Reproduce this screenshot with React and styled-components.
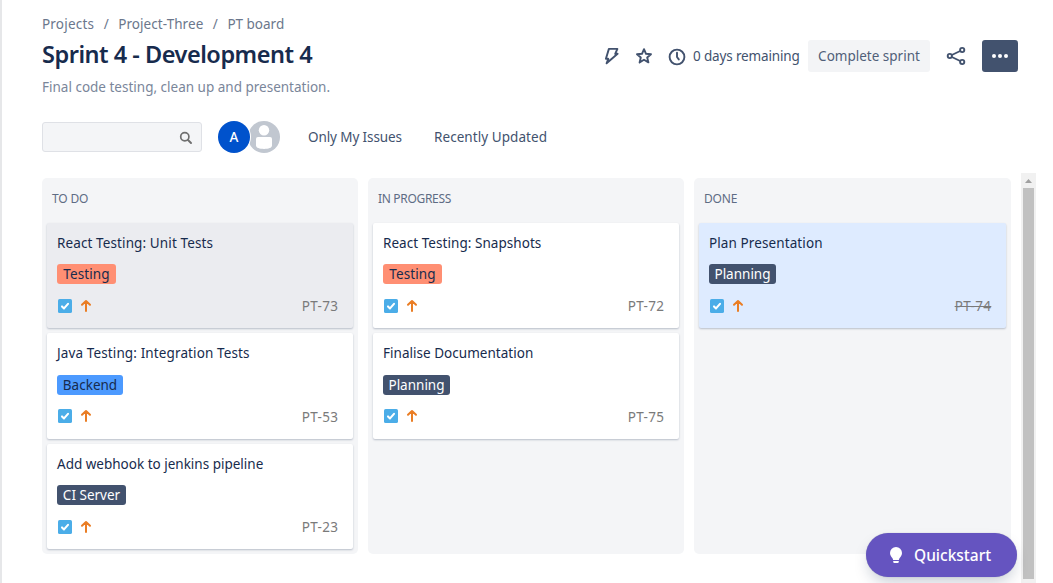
import React from "react";
import styled, { createGlobalStyle, css } from "styled-components";

const Global = createGlobalStyle`
  *, *::before, *::after { box-sizing: border-box; }
  html, body { margin: 0; padding: 0; overflow: hidden; background: #fff; }
  body { font-family: "Noto Sans", "Open Sans", sans-serif; font-size: 13.5px; color: #172b4d; }
  button { font: inherit; border: 0; padding: 0; background: none; color: inherit; letter-spacing: inherit; }
`;

const Page = styled.main`
  position: relative;
  width: 1053px;
  height: 583px;
  padding: 14px 17px 0 40px;
  border-left: 2px solid #e6e7e9;
  display: flex;
  flex-direction: column;
  overflow: hidden;
`;

const Text = styled.span`
  letter-spacing: ${(p) => p.$track || 0}px;
  white-space: nowrap;
`;

const Breadcrumbs = styled.nav`
  display: flex;
  height: 20px;
  align-items: center;
  color: #6b778c;
`;

const Separator = styled.span`
  width: 24px;
  text-align: center;
`;

const Header = styled.header`
  display: flex;
  height: 64px;
  justify-content: space-between;
  padding-right: 18px;
`;

const Heading = styled.div`
  display: flex;
  flex-direction: column;
`;

const Title = styled.h1`
  margin: 6px 0 0;
  height: 28px;
  line-height: 28px;
  font-size: 23.5px;
  font-weight: 600;
  white-space: nowrap;
  letter-spacing: -0.48px;
`;

const Goal = styled.p`
  margin: 9px 0 0;
  height: 20px;
  line-height: 20px;
  color: #7a869a;
`;

const Actions = styled.div`
  display: flex;
  height: 32px;
  margin-top: 6px;
  align-items: center;
  color: #42526e;
`;

const IconSlot = styled.button`
  display: flex;
  width: ${(p) => p.$w || 32}px;
  height: 32px;
  align-items: center;
  justify-content: center;
  color: #42526e;
`;

const Remaining = styled.div`
  width: 115px;
`;

const CompleteButton = styled.button`
  width: 122px;
  height: 32px;
  border-radius: 3px;
  background: #f3f4f6;
  color: #505f79;
`;

const MoreButton = styled.button`
  display: flex;
  width: 36px;
  height: 32px;
  align-items: center;
  justify-content: center;
  border-radius: 3px;
  background: #42526e;
  color: #fff;
`;

const Filters = styled.div`
  display: flex;
  height: 32px;
  margin-top: 23px;
  align-items: center;
  color: #42526e;
`;

const Search = styled.div`
  display: flex;
  width: 160px;
  height: 30px;
  align-items: center;
  justify-content: flex-end;
  padding: 2px 8px 0 0;
  border: 1px solid #dfe1e6;
  border-radius: 3px;
  background: #f4f5f7;
  color: #6f6f6f;
`;

const Avatars = styled.div`
  display: flex;
  margin-left: 16px;
  width: 90px;
`;

const Avatar = styled.div`
  position: relative;
  z-index: 1;
  width: 32px;
  height: 32px;
  border-radius: 50%;
  background: #0052cc;
  box-shadow: 0 0 0 1px #fff;
  color: #fff;
  font-size: 13.5px;
  font-weight: 500;
  line-height: 32px;
  text-align: center;
`;

const Anonymous = styled.svg`
  margin-left: -2px;
`;

const FilterLink = styled.button`
  width: ${(p) => p.$w}px;
  text-align: left;
`;

const BoardArea = styled.section`
  display: flex;
  flex: 1;
  min-height: 0;
  margin-top: 20px;
`;

const Columns = styled.div`
  display: grid;
  grid-template-columns: 316px 316px 317px;
  column-gap: 10px;
  height: 376px;
  margin-top: 5px;
`;

const Column = styled.div`
  padding: 0 4.7px 0 5px;
  border-radius: 5px;
  background: #f4f5f7;
`;

const ColumnTitle = styled.h2`
  margin: 0;
  height: 44.7px;
  padding: 11px 5px 0;
  line-height: 20px;
  font-size: 12px;
  font-weight: 400;
  color: #5e6c84;
`;

const backgrounds = { plain: "#fff", hovered: "#ebecf0", selected: "#deebff" };

const Card = styled.article`
  height: 105.5px;
  margin-bottom: 5px;
  padding: 10px 15px 0 10px;
  border-radius: 2px;
  background: ${(p) => backgrounds[p.$state]};
  box-shadow: 0 1px 2px rgba(9, 30, 66, 0.25);
`;

const Summary = styled.div`
  height: 21px;
  line-height: 21px;
`;

const tones = {
  coral: css`background: #ff8f73; color: #172b4d;`,
  blue: css`background: #4c9aff; color: #172b4d;`,
  navy: css`background: #42526e; color: #fff;`,
};

const Label = styled.div`
  width: ${(p) => p.$w}px;
  height: 20px;
  margin-top: 10.4px;
  border-radius: 3px;
  line-height: 20px;
  text-align: center;
  ${(p) => tones[p.$tone]}
`;

const CardFooter = styled.div`
  display: flex;
  height: 20px;
  margin-top: 11.5px;
  align-items: center;
`;

const TaskIcon = styled.svg`
  margin: 0 7px 0 1px;
`;

const IssueKey = styled.div`
  margin-left: auto;
  padding-top: 1px;
  line-height: 20px;
  color: #7a7a7a;
  text-decoration: ${(p) => (p.$done ? "line-through" : "none")};
`;

const Scrollbar = styled.div`
  width: 15px;
  height: 410px;
  margin-left: 10px;
  background: #f1f1f1;
  display: flex;
  flex-direction: column;
  align-items: center;
`;

const ScrollArrow = styled.svg`
  display: block;
  flex: none;
`;

const Thumb = styled.div`
  width: 11px;
  height: 391px;
  background: #c1c1c1;
`;

const Quickstart = styled.button`
  position: absolute;
  right: 36px;
  bottom: 6px;
  display: flex;
  width: 151px;
  height: 44px;
  align-items: center;
  padding-left: 20px;
  gap: 8px;
  border-radius: 22px;
  background: #6554c0;
  color: #fff;
  font-size: 15.5px;
  font-weight: 500;
  box-shadow: 0 8px 16px -4px rgba(9, 30, 66, 0.25), 0 0 1px rgba(9, 30, 66, 0.31);
`;

const columns = [
  {
    name: "TO DO", track: -0.15,
    cards: [
      { title: "React Testing: Unit Tests", track: 0.11, label: "Testing", labelTrack: 0.1, tone: "coral", w: 59, key: "PT-73", state: "hovered" },
      { title: "Java Testing: Integration Tests", track: 0.12, label: "Backend", tone: "blue", w: 66, key: "PT-53", state: "plain" },
      { title: "Add webhook to jenkins pipeline", track: 0, label: "CI Server", tone: "navy", w: 69, key: "PT-23", state: "plain" },
    ],
  },
  {
    name: "IN PROGRESS", track: -0.32,
    cards: [
      { title: "React Testing: Snapshots", track: 0.05, label: "Testing", labelTrack: 0.1, tone: "coral", w: 59, key: "PT-72", state: "plain" },
      { title: "Finalise Documentation", track: 0.03, label: "Planning", tone: "navy", w: 67, key: "PT-75", state: "plain" },
    ],
  },
  {
    name: "DONE", track: -0.2,
    cards: [
      { title: "Plan Presentation", track: 0.1, label: "Planning", tone: "navy", w: 67, key: "PT-74", state: "selected", done: true },
    ],
  },
];

const IssueCard = ({ card }) => (
  <Card $state={card.state}>
    <Summary><Text $track={card.track}>{card.title}</Text></Summary>
    <Label $tone={card.tone} $w={card.w}><Text $track={card.labelTrack}>{card.label}</Text></Label>
    <CardFooter>
      <TaskIcon width="14" height="14" viewBox="0 0 14 14">
        <rect width="14" height="14" rx="1.6" fill="#4bade8" />
        <path d="M4 7.4 6 9.4 10 4.9" fill="none" stroke="#fff" strokeWidth="2.1" strokeLinecap="round" strokeLinejoin="round" />
      </TaskIcon>
      <svg width="14" height="14" viewBox="0 0 14 14" fill="none" stroke="#ea7d24" strokeWidth="2" strokeLinecap="round" strokeLinejoin="round">
        <path d="M7 12V2.2M3 5.800 7 2l4 3.800" />
      </svg>
      <IssueKey $done={card.done}><Text $track={0.35}>{card.key}</Text></IssueKey>
    </CardFooter>
  </Card>
);

export default function App() {
  return (
    <>
      <Global />
      <Page>
        <Breadcrumbs>
          <Text $track={0.2}>Projects</Text><Separator>/</Separator>
          <Text $track={0.07}>Project-Three</Text><Separator>/</Separator>
          <Text>PT board</Text>
        </Breadcrumbs>
        <Header>
          <Heading>
            <Title>Sprint 4 - Development 4</Title>
            <Goal><Text>Final code testing, clean up and presentation.</Text></Goal>
          </Heading>
          <Actions>
            <IconSlot aria-label="Automation">
              <svg width="24" height="24" viewBox="0 0 24 24" fill="none" stroke="currentColor" strokeWidth="1.9" strokeLinejoin="round">
                <path d="M8.900 4.900H17.400L15.200 9.800H17.600L6.600 19.300 8.300 14.800H5.900Z" />
              </svg>
            </IconSlot>
            <IconSlot aria-label="Star">
              <svg width="24" height="24" viewBox="0 0 24 24" fill="none" stroke="currentColor" strokeWidth="1.9" strokeLinejoin="round">
                <path d="m12 5.2 2 4.6 5 .4-3.8 3.3 1.2 4.9-4.4-2.6-4.4 2.6 1.2-4.9L5 10.2l5-.4z" />
              </svg>
            </IconSlot>
            <IconSlot aria-label="Time remaining" $w={33}>
              <svg width="24" height="24" viewBox="0 0 24 24" fill="none" stroke="currentColor" strokeWidth="1.9" strokeLinecap="round" strokeLinejoin="round">
                <circle cx="12" cy="13" r="7.4" />
                <path d="M12 8.8V13l1.800 2.400" />
              </svg>
            </IconSlot>
            <Remaining><Text $track={-0.15}>0 days remaining</Text></Remaining>
            <CompleteButton><Text>Complete sprint</Text></CompleteButton>
            <IconSlot aria-label="Share" $w={52}>
              <svg width="24" height="24" viewBox="0 0 24 24" fill="none" stroke="currentColor" strokeWidth="1.9">
                <circle cx="5.8" cy="12" r="2.1" />
                <circle cx="18.2" cy="6" r="2.1" />
                <circle cx="18.2" cy="18" r="2.1" />
                <path d="m7.8 11 8.4-4M7.8 13l8.4 4" />
              </svg>
            </IconSlot>
            <MoreButton aria-label="More">
              <svg width="18" height="6" viewBox="0 0 18 6" fill="currentColor">
                <circle cx="3" cy="3" r="2" /><circle cx="9" cy="3" r="2" /><circle cx="15" cy="3" r="2" />
              </svg>
            </MoreButton>
          </Actions>
        </Header>
        <Filters>
          <Search>
            <svg width="14" height="14" viewBox="0 0 14 14" fill="none" stroke="currentColor" strokeWidth="1.7" strokeLinecap="round">
              <circle cx="5.800" cy="5.800" r="4.100" /><path d="m9 9 3 3" strokeWidth="2" />
            </svg>
          </Search>
          <Avatars>
            <Avatar>A</Avatar>
            <Anonymous width="32" height="32" viewBox="0 0 32 32">
              <circle cx="16" cy="16" r="16" fill="#c1c7d0" />
              <circle cx="16" cy="9.3" r="5.2" fill="#fff" />
              <path d="M8 18a2 2 0 0 1 2-2h12a2 2 0 0 1 2 2v6.600c0 2.400-3.600 3.400-8 3.400s-8-1-8-3.400z" fill="#fff" />
            </Anonymous>
          </Avatars>
          <FilterLink $w={126}><Text $track={-0.1}>Only My Issues</Text></FilterLink>
          <FilterLink $w={120}><Text $track={0.06}>Recently Updated</Text></FilterLink>
        </Filters>
        <BoardArea>
          <Columns>
            {columns.map((c) => (
              <Column key={c.name}>
                <ColumnTitle><Text $track={c.track}>{c.name}</Text></ColumnTitle>
                {c.cards.map((card) => <IssueCard key={card.key} card={card} />)}
              </Column>
            ))}
          </Columns>
          <Scrollbar>
            <ScrollArrow width="15" height="15" viewBox="0 0 15 15"><path d="M4 10h7L7.500 6z" fill="#a0a0a0" /></ScrollArrow>
            <Thumb />
          </Scrollbar>
        </BoardArea>
        <Quickstart>
          <svg width="20" height="20" viewBox="0 0 20 20" fill="#fff">
            <path d="M10 2a6 6 0 0 0-6 6c0 2.300 1.200 3.700 2.300 4.900.5.600.7 1.100.8 2.100h5.800c.1-1 .3-1.500.8-2.100C14.800 11.700 16 10.300 16 8a6 6 0 0 0-6-6z" />
            <path d="M7.200 16h5.600v.8a1.200 1.200 0 0 1-1.200 1.200H8.400a1.200 1.200 0 0 1-1.200-1.200z" />
          </svg>
          <Text>Quickstart</Text>
        </Quickstart>
      </Page>
    </>
  );
}
